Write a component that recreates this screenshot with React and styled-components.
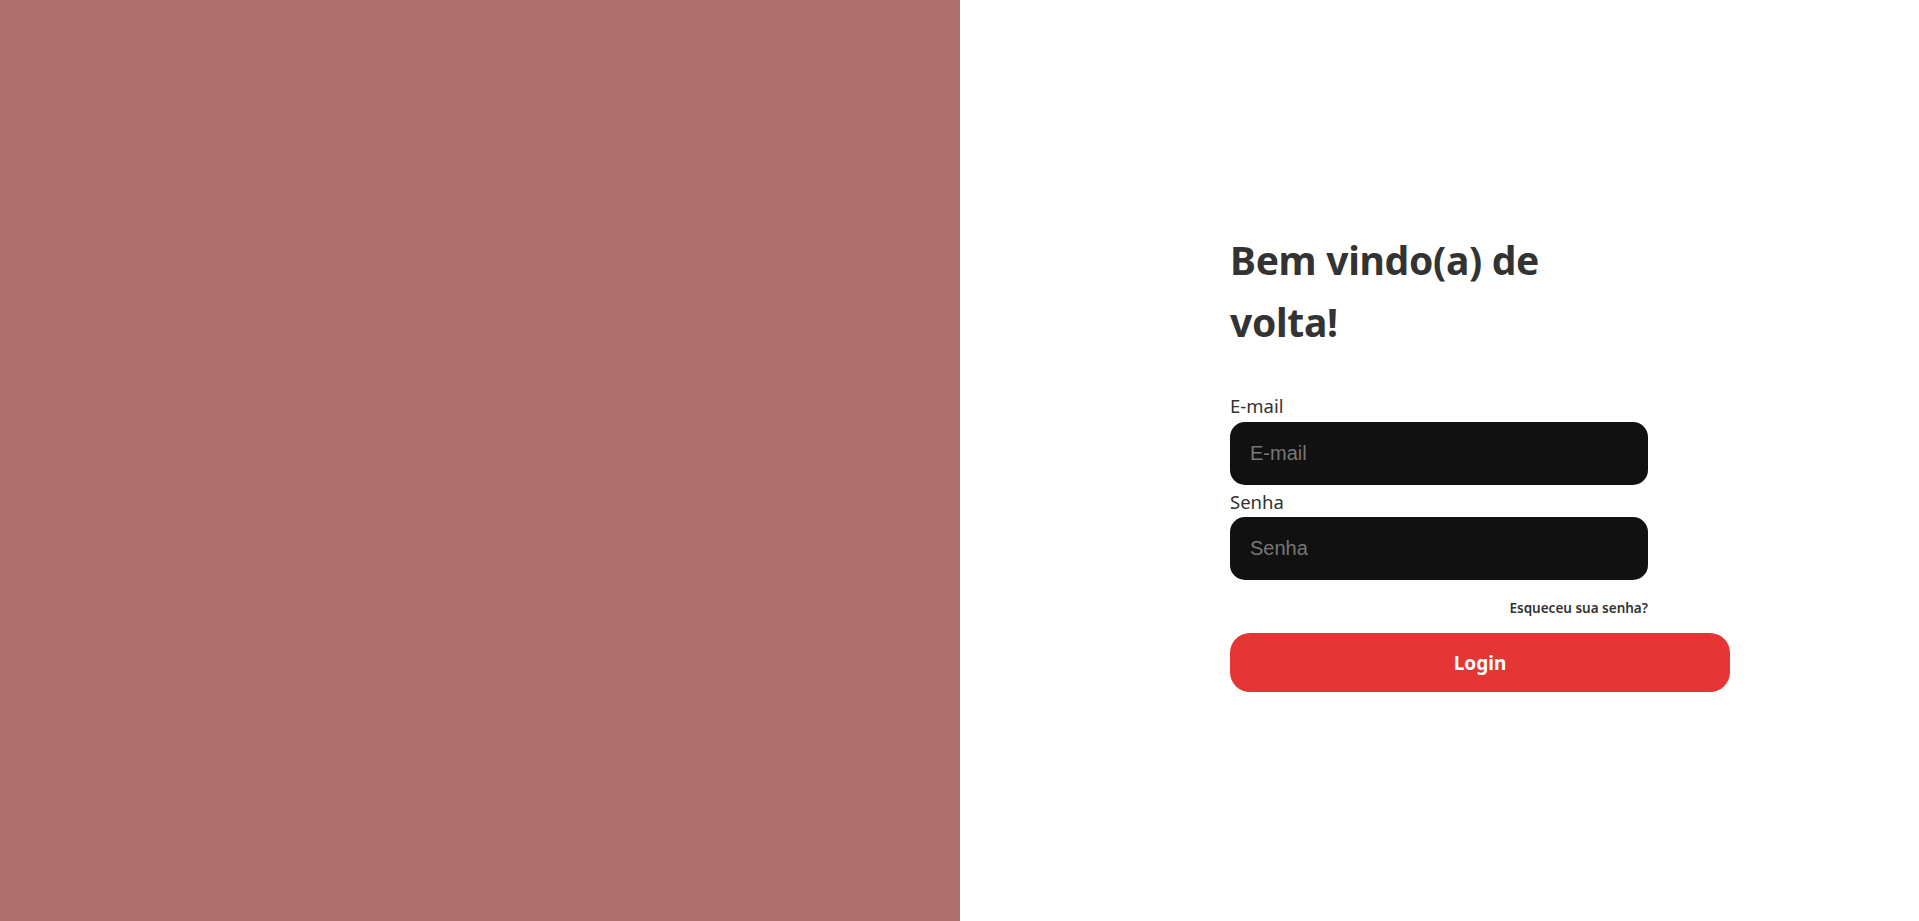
import React from "react";
import styled, { createGlobalStyle } from "styled-components";

const GlobalStyle = createGlobalStyle`
  * { box-sizing: border-box; }
  html, body { margin: 0; padding: 0; }
  body {
    font-family: "Noto Sans", "Open Sans", sans-serif;
    color: #333;
    background: #fff;
  }
`;

const Page = styled.div`
  display: grid;
  grid-template-columns: 960px 1fr;
  height: 100vh;
  min-height: 921px;
`;

const Banner = styled.aside`
  background: #b06f6f;
`;

const Side = styled.main`
  display: flex;
  align-items: center;
  padding-left: 270px;
  background: #fff;
`;

const Form = styled.form`
  width: 500px;
  display: flex;
  flex-direction: column;
`;

const Title = styled.h1`
  margin: 0 0 41px;
  width: 417px;
  font-size: 39px;
  line-height: 62px;
  font-weight: 700;
  color: #333;
  letter-spacing: -0.3px;
`;

const Fields = styled.div`
  width: 418px;
  display: flex;
  flex-direction: column;
`;

const Label = styled.label`
  font-size: 18.5px;
  line-height: 24px;
  color: #333;
  margin-bottom: ${(p) => p.$gap || 4}px;
`;

const Input = styled.input`
  height: 63px;
  width: 100%;
  border: none;
  border-radius: 15px;
  background: #111;
  color: #eee;
  padding: 0 20px;
  font-family: "Liberation Sans", Arial, sans-serif;
  font-size: 20px;
  margin-bottom: ${(p) => p.$after || 0}px;
  outline: none;
  &::placeholder { color: #777; }
`;

const Forgot = styled.a`
  align-self: flex-end;
  font-size: 13.5px;
  line-height: 20px;
  font-weight: 600;
  color: #333;
  text-decoration: none;
  cursor: pointer;
`;

const LoginButton = styled.button`
  margin-top: 15px;
  width: 500px;
  height: 59px;
  border: none;
  border-radius: 20px;
  background: #e53535;
  color: #fff;
  font-family: "Noto Sans", "Open Sans", sans-serif;
  font-size: 19px;
  font-weight: 700;
  cursor: pointer;
`;

export default function App() {
  return (
    <>
      <GlobalStyle />
      <Page>
        <Banner />
        <Side>
          <Form onSubmit={(e) => e.preventDefault()}>
            <Title>Bem vindo(a) de volta!</Title>
            <Fields>
              <Label htmlFor="email">E-mail</Label>
              <Input id="email" type="email" placeholder="E-mail" $after={5} />
              <Label htmlFor="senha" $gap={3}>Senha</Label>
              <Input id="senha" type="password" placeholder="Senha" $after={18} />
              <Forgot>Esqueceu sua senha?</Forgot>
            </Fields>
            <LoginButton type="submit">Login</LoginButton>
          </Form>
        </Side>
      </Page>
    </>
  );
}
